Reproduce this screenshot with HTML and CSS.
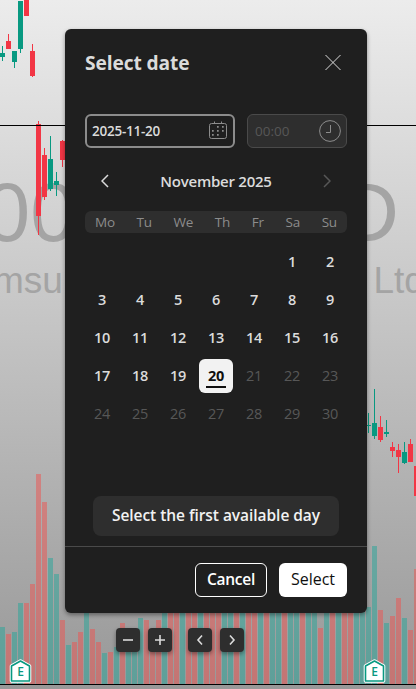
FILE: index.html
```html
<!DOCTYPE html>
<html lang="en">
<head>
  <meta charset="UTF-8">
  <title>Select date</title>
  <link rel="stylesheet" href="styles.css">
</head>
<body>
  <svg class="chart" id="chart" width="416" height="689" viewBox="0 0 416 689">
    <g class="watermark">
      <text x="-16" y="241" font-size="83">00</text>
      <text x="339" y="241" font-size="83">D</text>
      <text x="-7" y="293" font-size="37">msu</text>
      <text x="373.5" y="293" font-size="37">Ltd</text>
    </g>
    <g id="volume"></g>
    <g id="candles"></g>
    <rect y="125" width="416" height="1"/>
    <rect y="684" width="416" height="1"/>
    <g class="earnings">
      <path class="halo" d="M11.5 666 L20.5 661 L29.5 666 V681 H11.5 Z"/>
      <path d="M11.5 666 L20.5 661 L29.5 666 V681 H11.5 Z"/>
      <text x="20.5" y="676">E</text>
    </g>
    <g class="earnings">
      <path class="halo" d="M365.5 666 L374.5 661 L383.5 666 V681 H365.5 Z"/>
      <path d="M365.5 666 L374.5 661 L383.5 666 V681 H365.5 Z"/>
      <text x="374.5" y="676">E</text>
    </g>
  </svg>

  <main class="dialog">
    <header class="dialog-header">
      <h1>Select date</h1>
      <svg class="close" width="18" height="18" viewBox="0 0 18 18"><path d="M1.5 1l15 15m0-15l-15 15"/></svg>
    </header>

    <div class="fields">
      <div class="field field-date">
        <span>2025-11-20</span>
        <svg width="20" height="20" viewBox="0 0 20 20">
          <rect x="1.5" y="2.5" width="17" height="15" rx="2"/>
          <path d="M6.5 .5v2M13.5 .5v2"/>
          <path class="dots" d="M9 5h1.7v1.7H9zM14 5h1.7v1.7H14zM4 9h1.7v1.7H4zM9 9h1.7v1.7H9zM14 9h1.7v1.7H14zM4 13h1.7v1.7H4zM9 13h1.7v1.7H9z"/>
        </svg>
      </div>
      <div class="field field-time">
        <span>00:00</span>
        <svg width="22" height="22" viewBox="0 0 22 22"><circle cx="11" cy="11" r="10.4"/><path d="M11.5 5v7.5H7"/></svg>
      </div>
    </div>

    <div class="month">
      <svg width="8" height="14" viewBox="0 0 8 14"><path d="M7 1L1 7l6 6"/></svg>
      <span>November 2025</span>
      <svg class="disabled" width="8" height="14" viewBox="0 0 8 14"><path d="M1 1l6 6-6 6"/></svg>
    </div>

    <div class="weekdays">
      <span>Mo</span><span>Tu</span><span>We</span><span>Th</span><span>Fr</span><span>Sa</span><span>Su</span>
    </div>
    <div class="days" id="days"></div>

    <button class="first-day">Select the first available day</button>

    <footer class="dialog-footer">
      <button class="cancel">Cancel</button>
      <button class="select">Select</button>
    </footer>
  </main>

  <div class="controls">
    <button><svg width="24" height="24"><path d="M7 12h10"/></svg></button>
    <button><svg width="24" height="24"><path d="M7 12h10M12 7v10"/></svg></button>
    <button class="gap"><svg width="24" height="24"><path d="M14 7.5L10 12l4 4.5"/></svg></button>
    <button><svg width="24" height="24"><path d="M10 7.5l4 4.5-4 4.5"/></svg></button>
  </div>
  <script src="script.js"></script>
</body>
</html>
```

FILE: styles.css
```css
* {
  box-sizing: border-box;
}

body {
  margin: 0;
  height: 689px;
  position: relative;
  overflow: hidden;
  background: linear-gradient(#ececec, #989898);
  font-family: "Trebuchet MS", "Open Sans", sans-serif;
  color: #dbdbdb;
}

button {
  font: inherit;
  padding: 0;
  border: none;
}

/* Chart */
.chart {
  display: block;
}

.watermark {
  font-family: "Liberation Sans", sans-serif;
  fill: #a4a4a4;
}

.up {
  fill: #089981;
}

.down {
  fill: #f23645;
}

#volume {
  opacity: .5;
}

#volume .up {
  fill: #26a69a;
}

#volume .down {
  fill: #ef5350;
}

.earnings path {
  fill: #fff;
  stroke: #089981;
  stroke-width: 1.6;
  stroke-linejoin: round;
}

.earnings .halo {
  stroke: #fff;
  stroke-width: 3.6;
}

.earnings text {
  fill: #089981;
  font-size: 12px;
  font-weight: 600;
  text-anchor: middle;
}

/* Dialog */
.dialog {
  position: absolute;
  top: 29px;
  left: 65px;
  width: 302px;
  height: 584px;
  display: flex;
  flex-direction: column;
  background: #1f1f1f;
  border-radius: 6px;
  box-shadow: 0 2px 4px rgba(0, 0, 0, .4);
}

.dialog svg {
  fill: none;
  stroke: #dbdbdb;
}

.dialog-header {
  height: 69px;
  padding: 0 25px 2px 20px;
  display: flex;
  align-items: center;
  justify-content: space-between;
}

h1 {
  margin: 0;
  font-size: 19.2px;
  font-weight: 700;
  letter-spacing: -.1px;
}

.fields {
  display: flex;
  gap: 12px;
  margin: 16px 20px 0;
}

.field {
  height: 34px;
  display: flex;
  align-items: center;
  justify-content: space-between;
  border-radius: 6px;
  font-size: 13.5px;
}

.field-date {
  width: 150px;
  padding: 0 5px;
  border: 2px solid #8c8c8c;
  font-weight: 600;
  letter-spacing: -.25px;
}

.field-time {
  width: 100px;
  padding: 0 5px 0 7px;
  border: 1px solid #4a4a4a;
  background: #2e2e2e;
  color: #575757;
}

.dialog .field svg {
  stroke: #8c8c8c;
}

.dialog .field .dots {
  fill: #8c8c8c;
  stroke: none;
}

.month {
  height: 34px;
  margin: 16px 36px 0;
  display: flex;
  align-items: center;
  justify-content: space-between;
  font-size: 15px;
  font-weight: 600;
  letter-spacing: -.25px;
}

.month svg {
  stroke-width: 1.5;
}

.dialog .disabled {
  stroke: #575757;
}

.weekdays {
  height: 22px;
  margin: 13px 20px 0;
  padding: 0 10px;
  display: flex;
  align-items: center;
  justify-content: space-between;
  background: #2e2e2e;
  border-radius: 6px;
  color: #8c8c8c;
  font-size: 13.5px;
  letter-spacing: -.2px;
}

.days {
  margin: 12px 18px 0;
  height: 190px;
  display: grid;
  grid-template-columns: repeat(7, 34px);
  grid-auto-rows: 34px;
  gap: 4px;
  padding-left: 2px;
  font-size: 14.5px;
  font-weight: 600;
  letter-spacing: -.4px;
}

.day {
  display: flex;
  align-items: center;
  justify-content: center;
  padding-bottom: 2px;
}

.day.off {
  color: #575757;
  font-weight: 400;
}

.day.selected {
  position: relative;
  background: #f2f2f2;
  border-radius: 6px;
  color: #0f0f0f;
  font-weight: 700;
}

.day.selected::after {
  content: "";
  position: absolute;
  left: 7px;
  bottom: 5px;
  width: 20px;
  height: 2px;
  background: #0f0f0f;
}

.first-day {
  width: 246px;
  height: 40px;
  margin: 61px auto 0;
  padding-bottom: 2px;
  background: #2e2e2e;
  color: #f2f2f2;
  border-radius: 8px;
  font-size: 15.5px;
  font-weight: 600;
  letter-spacing: -.05px;
}

.dialog-footer {
  height: 67px;
  margin-top: auto;
  padding: 0 20px;
  display: flex;
  align-items: center;
  justify-content: flex-end;
  gap: 12px;
  border-top: 1px solid #4a4a4a;
}

.dialog-footer button {
  height: 34px;
  padding-bottom: 2px;
  border-radius: 6px;
}

.dialog-footer .cancel {
  width: 72px;
  background: none;
  border: 1px solid #fff;
  color: #fff;
  font-size: 15.5px;
  font-weight: 600;
  letter-spacing: -.3px;
}

.dialog-footer .select {
  width: 68px;
  background: #fff;
  color: #0f0f0f;
  font-size: 16px;
}

/* Chart controls */
.controls {
  position: absolute;
  top: 628px;
  left: 116px;
  display: flex;
  gap: 8px;
}

.controls button {
  width: 24px;
  height: 24px;
  background: #2e2e2e;
  border-radius: 4px;
  box-shadow: 0 2px 4px rgba(0, 0, 0, .4);
}

.controls .gap {
  margin-left: 8px;
}

.controls svg {
  display: block;
  fill: none;
  stroke: #dbdbdb;
  stroke-width: 1.6;
}
```

FILE: script.js
```js
const NS = 'http://www.w3.org/2000/svg';

function rect(parent, x, y, w, h, cls) {
  const r = document.createElementNS(NS, 'rect');
  r.setAttribute('x', x);
  r.setAttribute('y', y);
  r.setAttribute('width', w);
  r.setAttribute('height', h);
  r.setAttribute('class', cls);
  parent.appendChild(r);
}

// Volume bars: direction and top, one every 6px
const bars = 'u627 d634 u632 u603 d603 d584 d474 d502 u558 u574 d620 u645 d642 d632 u600 d629 d642 u653 d652 u647 d623 u645 u640 u618 d620 d640 d620 u600 d600 d600 u600 d600 d600 u600 d600 d600 d600 u600 u600 d600 u600 d600 d600 u600 d600 u600 u600 d600 u600 u600 d600 u600 u600 d628 u600 d600 u600 d600 d600 u600 u600 u607 u546 d610 u623 d616 d598 u618 d630 d569';
const volume = document.getElementById('volume');
bars.split(' ').forEach((b, i) => {
  const top = Number(b.slice(1));
  rect(volume, i * 6, top, 5, 684 - top, b[0] === 'u' ? 'up' : 'down');
});

// Candles: x, high, open/close top, open/close bottom, low, direction
const candles = [
  [0, 46, 53, 57, 61, 'up'], [6, 34, 41, 49, 49, 'down'],
  [12, 51, 51, 62, 68, 'up'], [18, 1, 1, 49, 53, 'up'],
  [24, 0, 0, 16, 16, 'down'], [30, 44, 51, 76, 77, 'down'],
  [36, 121, 124, 216, 235, 'down'], [42, 148, 155, 197, 200, 'down'],
  [48, 136, 159, 189, 191, 'up'], [54, 172, 181, 185, 196, 'up'],
  [60, 140, 141, 160, 167, 'down'],
  [366, 413, 425, 426, 433, 'up'], [372, 389, 423, 436, 439, 'up'],
  [378, 416, 427, 440, 442, 'down'], [384, 420, 432, 434, 437, 'up'],
  [390, 442, 447, 451, 457, 'down'], [396, 444, 450, 457, 473, 'down'],
  [402, 442, 452, 463, 464, 'up'], [408, 439, 444, 462, 462, 'down'],
  [414, 466, 466, 496, 496, 'down']
];
const group = document.getElementById('candles');
candles.forEach(([x, high, top, bottom, low, cls]) => {
  rect(group, x, top, 5, bottom - top, cls);
  rect(group, x + 2, high, 1, low - high, cls);
});

// November 2025 starts on a Saturday
const days = document.getElementById('days');
for (let d = 1; d <= 30; d++) {
  const day = document.createElement('span');
  day.className = 'day' + (d === 20 ? ' selected' : d > 20 ? ' off' : '');
  day.textContent = d;
  if (d === 1) day.style.gridColumnStart = 6;
  days.appendChild(day);
}
```
